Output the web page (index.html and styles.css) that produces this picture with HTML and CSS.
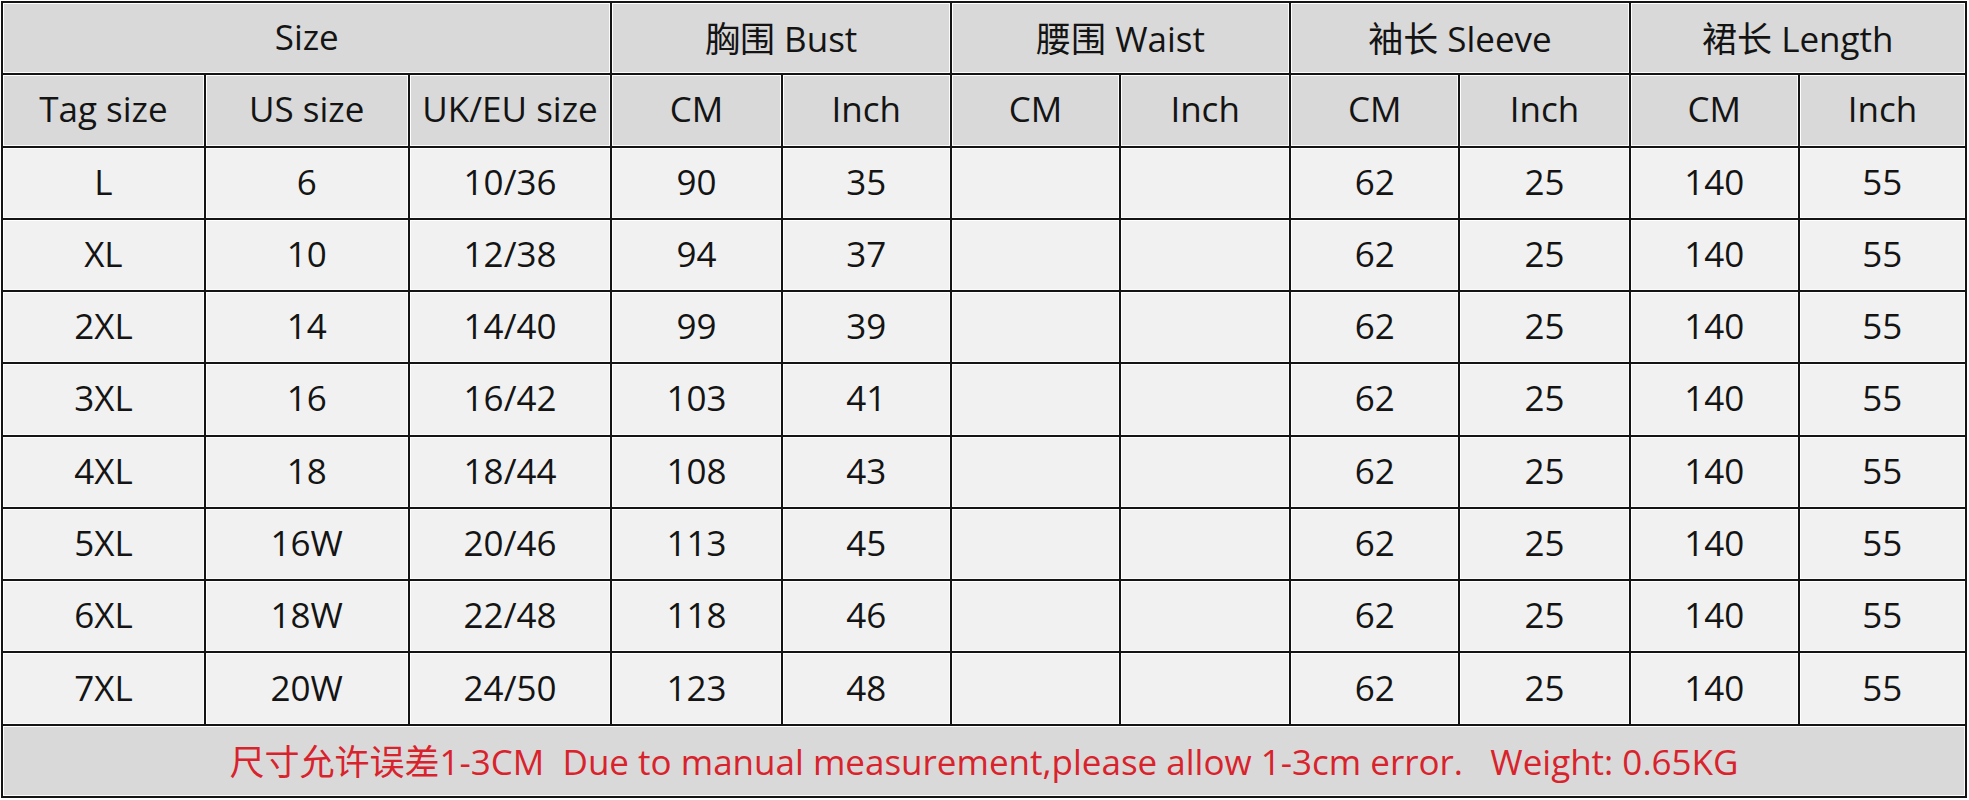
FILE: index.html
```html
<!DOCTYPE html>
<html lang="en">
<head>
<meta charset="utf-8">
<title>Size chart</title>
<link rel="stylesheet" href="styles.css">
</head>
<body>
<div class="chart">
  <div class="cell head span3">Size</div>
  <div class="cell head span2">胸围 Bust</div>
  <div class="cell head span2">腰围 Waist</div>
  <div class="cell head span2">袖长 Sleeve</div>
  <div class="cell head span2">裙长 Length</div>

  <div class="cell head">Tag size</div>
  <div class="cell head">US size</div>
  <div class="cell head">UK/EU size</div>
  <div class="cell head">CM</div>
  <div class="cell head">Inch</div>
  <div class="cell head">CM</div>
  <div class="cell head">Inch</div>
  <div class="cell head">CM</div>
  <div class="cell head">Inch</div>
  <div class="cell head">CM</div>
  <div class="cell head">Inch</div>

  <div class="cell">L</div><div class="cell">6</div><div class="cell">10/36</div><div class="cell">90</div><div class="cell">35</div><div class="cell"></div><div class="cell"></div><div class="cell">62</div><div class="cell">25</div><div class="cell">140</div><div class="cell">55</div>
  <div class="cell">XL</div><div class="cell">10</div><div class="cell">12/38</div><div class="cell">94</div><div class="cell">37</div><div class="cell"></div><div class="cell"></div><div class="cell">62</div><div class="cell">25</div><div class="cell">140</div><div class="cell">55</div>
  <div class="cell">2XL</div><div class="cell">14</div><div class="cell">14/40</div><div class="cell">99</div><div class="cell">39</div><div class="cell"></div><div class="cell"></div><div class="cell">62</div><div class="cell">25</div><div class="cell">140</div><div class="cell">55</div>
  <div class="cell">3XL</div><div class="cell">16</div><div class="cell">16/42</div><div class="cell">103</div><div class="cell">41</div><div class="cell"></div><div class="cell"></div><div class="cell">62</div><div class="cell">25</div><div class="cell">140</div><div class="cell">55</div>
  <div class="cell">4XL</div><div class="cell">18</div><div class="cell">18/44</div><div class="cell">108</div><div class="cell">43</div><div class="cell"></div><div class="cell"></div><div class="cell">62</div><div class="cell">25</div><div class="cell">140</div><div class="cell">55</div>
  <div class="cell">5XL</div><div class="cell">16W</div><div class="cell">20/46</div><div class="cell">113</div><div class="cell">45</div><div class="cell"></div><div class="cell"></div><div class="cell">62</div><div class="cell">25</div><div class="cell">140</div><div class="cell">55</div>
  <div class="cell">6XL</div><div class="cell">18W</div><div class="cell">22/48</div><div class="cell">118</div><div class="cell">46</div><div class="cell"></div><div class="cell"></div><div class="cell">62</div><div class="cell">25</div><div class="cell">140</div><div class="cell">55</div>
  <div class="cell">7XL</div><div class="cell">20W</div><div class="cell">24/50</div><div class="cell">123</div><div class="cell">48</div><div class="cell"></div><div class="cell"></div><div class="cell">62</div><div class="cell">25</div><div class="cell">140</div><div class="cell">55</div>

  <div class="cell foot">尺寸允许误差1-3CM  Due to manual measurement,please allow 1-3cm error.   Weight: 0.65KG</div>
</div>
</body>
</html>
```
FILE: styles.css
```css
html, body {
  margin: 0;
  padding: 0;
  background: #ffffff;
}
body {
  padding: 1px 0 0 1px;
  width: 1968px;
  height: 799px;
  box-sizing: border-box;
  overflow: hidden;
}
.chart {
  width: 1966px;
  height: 797px;
  box-sizing: border-box;
  display: grid;
  grid-template-columns: 203fr 204fr 203fr 170fr 169fr 169fr 170fr 169fr 170fr 169fr 167fr;
  grid-template-rows: repeat(11, 1fr);
  gap: 2px;
  padding: 2px;
  background: #141414;
  font-family: "Open Sans", "Noto Sans CJK SC", sans-serif;
  font-size: 35px;
  color: #141414;
}
.cell {
  display: flex;
  align-items: center;
  justify-content: center;
  background: #f1f1f1;
  box-shadow: inset 1px 1px 0 #ffffff, inset -1px -1px 0 #fbfbfb;
  padding-bottom: 3px;
  box-sizing: border-box;
  white-space: nowrap;
  overflow: hidden;
}
.head {
  background: #d9d9d9;
}
.span3 { grid-column: span 3; }
.span2 { grid-column: span 2; }
.foot {
  grid-column: 1 / -1;
  background: #d9d9d9;
  color: #d9232c;
  white-space: pre;
}
```
